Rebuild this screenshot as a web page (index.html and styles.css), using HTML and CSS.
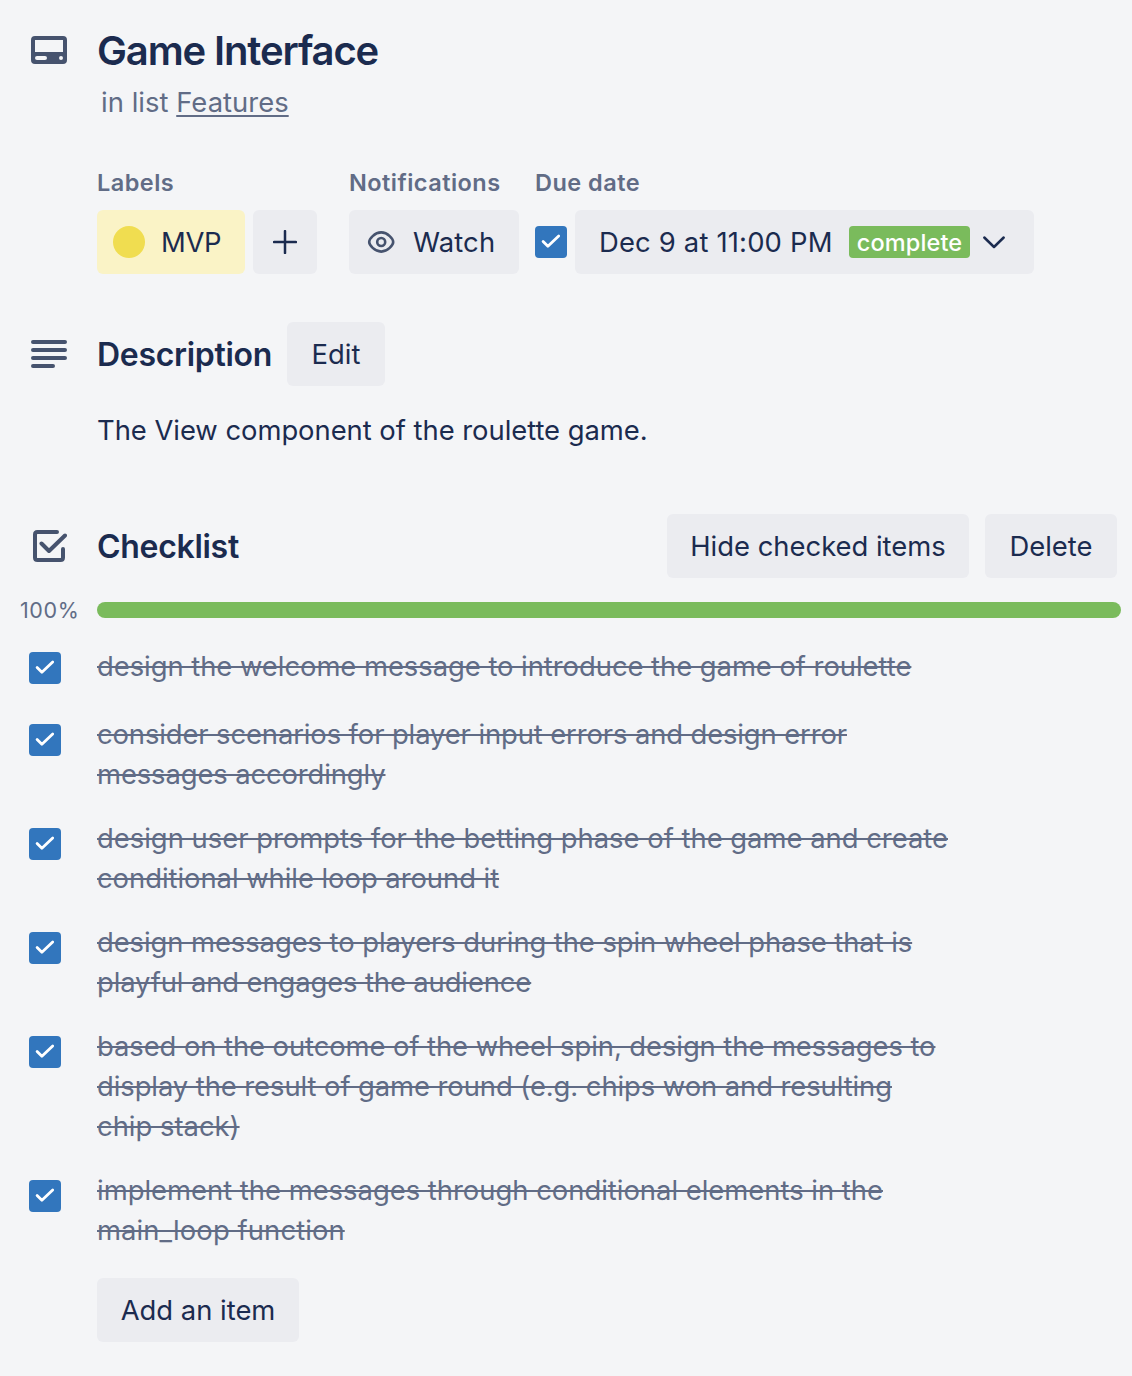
FILE: index.html
```html
<!DOCTYPE html>
<html lang="en">
<head>
<meta charset="utf-8">
<title>Game Interface</title>
<link rel="stylesheet" href="styles.css">
</head>
<body>
<svg class="sprite" aria-hidden="true">
  <symbol id="check" viewBox="0 0 32 32"><path d="M8.1 15.500 12.900 20.300 23.700 10" fill="none" stroke="#fff" stroke-width="2.800" stroke-linecap="round" stroke-linejoin="round"/></symbol>
</svg>
<main class="card">
  <header class="head">
    <svg class="head-icon" viewBox="0 0 36 28"><path fill="#46536e" fill-rule="evenodd" d="M4 0H32a4 4 0 0 1 4 4V24a4 4 0 0 1-4 4H4a4 4 0 0 1-4-4V4a4 4 0 0 1 4-4ZM4 4V16H32V4ZM6 20a2 2 0 0 0 0 4h8a2 2 0 0 0 0-4ZM30 20a2 2 0 1 0 0 4 2 2 0 0 0 0-4Z"/></svg>
    <div>
      <h1 class="title">Game Interface</h1>
      <p class="list">in list <a class="list-link">Features</a></p>
    </div>
  </header>
  <section class="meta">
    <div class="group labels">
      <h3 class="caption">Labels</h3>
      <div class="row">
        <span class="label"><i class="dot"></i><span class="mvp">MVP</span></span>
        <button class="btn plus"><svg width="24" height="24" viewBox="0 0 24 24"><path d="M12 1.1V22.9M1.1 12H22.9" stroke="#1b2b4f" stroke-width="2.500" stroke-linecap="round"/></svg></button>
      </div>
    </div>
    <div class="group notes">
      <h3 class="caption cap-notes">Notifications</h3>
      <button class="btn watch"><svg width="28" height="24" viewBox="0 0 28 24" fill="none" stroke="#46536e" stroke-width="2.600"><path d="M2.200 12C2.200 9 7.500 2.400 14.200 2.400S26.200 9 26.200 12 20.900 21.600 14.200 21.600 2.200 15 2.200 12Z"/><circle cx="14.200" cy="12" r="4"/></svg><span class="watch-text">Watch</span></button>
    </div>
    <div class="group due">
      <h3 class="caption cap-due">Due date</h3>
      <div class="row">
        <svg class="box"><use href="#check"/></svg>
        <button class="btn date"><span class="date-text">Dec 9 at 11:00 PM</span><span class="badge">complete</span><svg class="chevron" width="24" height="16" viewBox="0 0 24 16"><path d="M2.300 3.500 12 13 21.700 3.500" fill="none" stroke="#1b2b4f" stroke-width="2.500" stroke-linecap="round" stroke-linejoin="round"/></svg></button>
      </div>
    </div>
  </section>
  <section class="section-head desc-head">
    <svg class="desc-icon" width="36" height="28" viewBox="0 0 36 28"><path d="M2 2H34M2 10H34M2 18H34M2 26H22" stroke="#46536e" stroke-width="4" stroke-linecap="round"/></svg>
    <h2 class="heading h-desc">Description</h2>
    <button class="btn edit">Edit</button>
  </section>
  <p class="desc">The View component of the roulette game.</p>
  <section class="section-head check-head">
    <svg class="check-icon" width="36" height="34" viewBox="0 0 36 34"><path d="M26 3H6.500Q4 3 4 5.500V28.500Q4 31 6.500 31H29.500Q32 31 32 28.500V20" fill="none" stroke="#46536e" stroke-width="4" stroke-linecap="round" stroke-linejoin="round"/><path d="M10.500 14.500 18 22 34 6.500" fill="none" stroke="#46536e" stroke-width="4" stroke-linecap="round" stroke-linejoin="round"/></svg>
    <h2 class="heading h-check">Checklist</h2>
    <button class="btn hide">Hide checked items</button>
    <button class="btn delete">Delete</button>
  </section>
  <div class="progress"><span class="percent">100%</span><div class="track"><div class="bar" style="width:100%"></div></div></div>
  <ul class="items">
    <li class="item single"><svg class="box"><use href="#check"/></svg><s class="snug">design the welcome message to introduce the game of roulette</s></li>
    <li class="item"><svg class="box"><use href="#check"/></svg><s class="tight">consider scenarios for player input errors and design error<br>messages accordingly</s></li>
    <li class="item"><svg class="box"><use href="#check"/></svg><s>design user prompts for the betting phase of the game and create<br><span class="snug">conditional while loop around it</span></s></li>
    <li class="item"><svg class="box"><use href="#check"/></svg><s class="close">design messages to players during the spin wheel phase that is<br><span class="tight">playful and engages the audience</span></s></li>
    <li class="item"><svg class="box"><use href="#check"/></svg><s class="close">based on the outcome of the wheel spin, design the messages to<br>display the result of game round (e.g. chips won and resulting<br><span class="even">chip stack)</span></s></li>
    <li class="item"><svg class="box"><use href="#check"/></svg><s>implement the messages through conditional elements in the<br><span class="loose">main_loop function</span></s></li>
  </ul>
  <button class="btn add">Add an item</button>
</main>
</body>
</html>
```
FILE: styles.css
```css
* { box-sizing: border-box; margin: 0; padding: 0; }
body { background: #f4f5f7; color: #1b2b4f; font: 400 27.4px/40px Inter, sans-serif; }
svg { flex: none; display: block; }
.sprite { position: absolute; width: 0; height: 0; }
.card { width: 1132px; height: 1376px; padding: 27px 11px 0 97px; white-space: nowrap; }
.head { display: flex; margin-left: -66px; gap: 30px; }
.head-icon { width: 36px; height: 28px; margin-top: 9px; }
.title { font-size: 40px; line-height: 48px; font-weight: 600; letter-spacing: -1.13px; }
.list { margin: 7px 0 0 4px; color: #616c86; letter-spacing: .04px; }
.list-link { text-decoration: underline; text-decoration-thickness: 2px; text-underline-offset: 3px; }
.meta { display: flex; margin-top: 45px; }
.labels { width: 252px; }
.notes { width: 186px; }
.caption { height: 43px; font-size: 23.5px; line-height: 32px; font-weight: 600; letter-spacing: .47px; color: #616c86; }
.row { display: flex; align-items: center; gap: 8px; }
.btn { display: flex; flex: none; align-items: center; justify-content: center; height: 64px; border: 0; border-radius: 6px; background: #ebecf0; color: #1b2b4f; font: inherit; white-space: nowrap; }
.label { display: flex; align-items: center; width: 148px; height: 64px; padding-left: 16px; gap: 16px; border-radius: 6px; background: #faf3c6; }
.mvp { letter-spacing: -.3px; }
.dot { width: 32px; height: 32px; border-radius: 50%; background: #f0dd50; }
.plus { width: 64px; }
.watch { width: 170px; justify-content: flex-start; padding-left: 18px; gap: 18px; }
.watch-text { letter-spacing: .15px; }
.box { width: 32px; height: 32px; border-radius: 4px; background: #3276bd; }
.date { width: 459px; justify-content: flex-start; padding-left: 24px; }
.date-text { width: 250px; text-align: left; letter-spacing: .18px; }
.badge { width: 121px; height: 32px; padding-top: 1px; border-radius: 4px; background: #7abb5c; color: #fff; font-size: 23.5px; line-height: 32px; font-weight: 450; letter-spacing: .15px; text-align: center; }
.chevron { margin-left: 12px; }
.section-head { display: flex; align-items: center; height: 64px; margin-left: -66px; }
.heading { padding-top: 2px; font-size: 32px; line-height: 40px; font-weight: 600; letter-spacing: -.3px; }
.desc-head { margin-top: 48px; }
.desc-icon, .check-icon { margin-right: 30px; }
.h-desc { width: 190px; }
.edit { width: 98px; letter-spacing: .1px; }
.desc { margin-top: 24px; letter-spacing: -.03px; }
.check-head { margin-top: 64px; padding-right: 4px; }
.h-check { flex: 1; }
.hide { width: 302px; margin-right: 16px; }
.delete { width: 132px; }
.progress { display: flex; align-items: center; height: 32px; margin: 16px 0 14px -77px; }
.percent { width: 77px; font-size: 21.5px; letter-spacing: .6px; color: #616c86; }
.track { flex: 1; height: 16px; }
.bar { height: 16px; border-radius: 8px; background: #7abb5c; }
.items { list-style: none; margin: 0 0 6px -68px; color: #616c86; }
.item { display: flex; align-items: flex-start; gap: 36px; padding: 2px 0 22px; }
.item .box { margin-top: 10px; }
.single { padding: 6px 0 26px; }
.single .box { margin-top: 6px; }
.item s { text-decoration-thickness: 2px; }
.snug { letter-spacing: -.035px; }
.close { letter-spacing: -.07px; }
.tight { letter-spacing: -.11px; }
.even { letter-spacing: 0; }
.loose { letter-spacing: .1px; }
.add { width: 202px; }
```
